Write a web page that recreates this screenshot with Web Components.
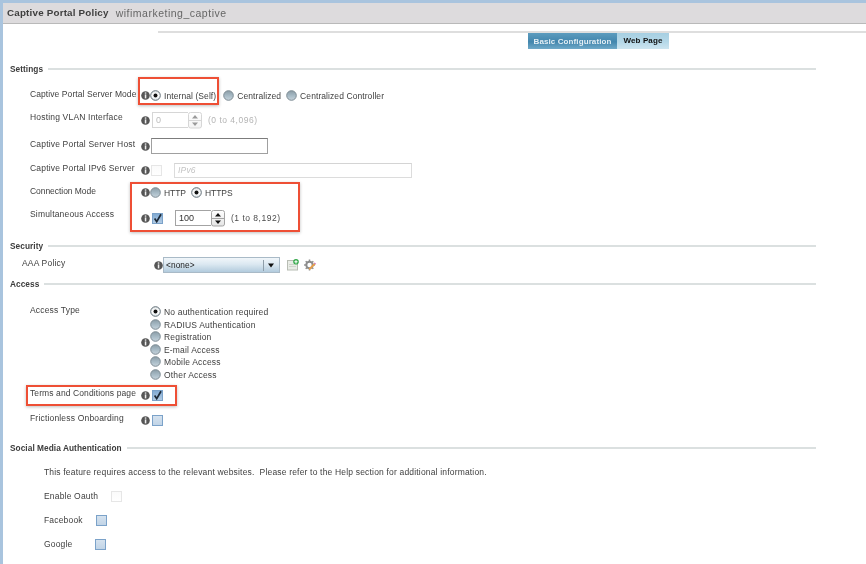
<!DOCTYPE html>
<html>
<head>
<meta charset="utf-8">
<title>Captive Portal Policy</title>
<style>
  html, body { margin: 0; height: 100%; background: #fff; overflow: hidden; }
</style>
</head>
<body>
<portal-page>
  <title-bar name="Captive Portal Policy" value="wifimarketing_captive"></title-bar>
  <tab-strip></tab-strip>

  <section-head style="margin-top:13px">Settings</section-head>
  <form-row label="Captive Portal Server Mode" info style="margin-top:8px;--h:25px;--lp:3px;--ls:.08px">
    <radio-opt checked>Internal (Self)</radio-opt>
    <radio-opt style="margin-left:7px">Centralized</radio-opt>
    <radio-opt style="margin-left:5px">Centralized Controller</radio-opt>
  </form-row>
  <form-row label="Hosting VLAN Interface" info style="--h:26px;--lp:1px">
    <spin-box value="0" disabled hint="(0 to 4,096)" style="margin-left:2px;--w:36px"></spin-box>
  </form-row>
  <form-row label="Captive Portal Server Host" info style="--h:24px;--lp:2px">
    <text-box style="margin-left:1px;--w:117px;--ih:16px"></text-box>
  </form-row>
  <form-row label="Captive Portal IPv6 Server" info style="--h:22px;--lp:2px">
    <check-box disabled style="margin-left:1px"></check-box>
    <text-box disabled placeholder="IPv6" style="margin-left:12px;--w:238px;--ih:15px"></text-box>
  </form-row>
  <form-row label="Connection Mode" info style="--h:26px;--lp:3px;--ls:-.05px">
    <radio-opt>HTTP</radio-opt>
    <radio-opt checked style="margin-left:5px">HTTPS</radio-opt>
  </form-row>
  <form-row label="Simultaneous Access" info style="--h:32px;--lp:0px;--ch:22px">
    <check-box checked style="margin-left:2px"></check-box>
    <spin-box value="100" hint="(1 to 8,192)" style="margin-left:12px;--w:36px"></spin-box>
  </form-row>

  <section-head>Security</section-head>
  <form-row label="AAA Policy" info style="margin-top:1px;--h:23px;--lp:2px;--lx:22px;--lw:132px">
    <select-box value="&lt;none&gt;"></select-box>
    <add-icon style="margin-left:7px"></add-icon>
    <gear-icon style="margin-left:5px"></gear-icon>
  </form-row>

  <section-head>Access</section-head>
  <form-row label="Access Type" info style="margin-top:12px;--h:81px;--lp:0px;--ch:78px">
    <div style="display:flex;flex-direction:column;padding-top:2px">
      <radio-opt checked style="height:12.5px">No authentication required</radio-opt>
      <radio-opt style="height:12.5px">RADIUS Authentication</radio-opt>
      <radio-opt style="height:12.5px">Registration</radio-opt>
      <radio-opt style="height:12.5px">E-mail Access</radio-opt>
      <radio-opt style="height:12.5px">Mobile Access</radio-opt>
      <radio-opt style="height:12.5px">Other Access</radio-opt>
    </div>
  </form-row>
  <form-row label="Terms and Conditions page" info style="--h:25px;--lp:2px;--ls:.1px">
    <check-box checked style="margin-left:2px"></check-box>
  </form-row>
  <form-row label="Frictionless Onboarding" info style="--h:32px;--lp:2px">
    <check-box style="margin-left:2px"></check-box>
  </form-row>

  <section-head>Social Media Authentication</section-head>
  <note-line style="margin-top:10px">This feature requires access to the relevant websites.&nbsp; Please refer to the Help section for additional information.</note-line>
  <form-row label="Enable Oauth" style="margin-top:6px;--h:24px;--lp:4px;--lx:44px;--lw:67px">
    <check-box disabled></check-box>
  </form-row>
  <form-row label="Facebook" style="--h:24px;--lp:4px;--lx:44px;--lw:52px">
    <check-box></check-box>
  </form-row>
  <form-row label="Google" style="--h:24px;--lp:4px;--lx:44px;--lw:51px">
    <check-box></check-box>
  </form-row>

  <red-box style="left:138px;top:77px;width:81px;height:28px"></red-box>
  <red-box style="left:130px;top:182px;width:170px;height:50px"></red-box>
  <red-box style="left:26px;top:385px;width:151px;height:21px"></red-box>
</portal-page>

<script>
const FONT = `font-family:"Liberation Sans",Arial,sans-serif;`;

class PortalPage extends HTMLElement {
    connectedCallback() {
        this.attachShadow({mode: 'open'}).innerHTML = `
        <style>
            :host{
                display:flex;
                flex-direction:column;
                position:relative;
                box-sizing:border-box;
                width:866px;
                height:564px;
                overflow:hidden;
                border-top:3px solid #a9c4de;
                border-left:3px solid #a9c4de;
                background:#fff;
                color:#404040;
                ${FONT}
                font-size:8.5px;
                letter-spacing:.18px;
                filter:blur(.35px);
            }
        </style>
        <slot></slot>`;
    }
}

class TitleBar extends HTMLElement {
    connectedCallback() {
        this.attachShadow({mode: 'open'}).innerHTML = `
        <style>
            :host{
                display:flex;
                align-items:center;
                box-sizing:border-box;
                height:21px;
                padding:0 0 1px 4px;
                background:#dddbdd;
                border-bottom:1px solid #b9b9b9;
            }
            b{font-size:9.8px;color:#3e3e3e;letter-spacing:.2px}
            span{margin-left:7px;font-size:10.5px;color:#666;letter-spacing:.5px}
        </style>
        <b>${this.getAttribute('name')}</b><span>${this.getAttribute('value')}</span>`;
    }
}

class TabStrip extends HTMLElement {
    connectedCallback() {
        this.attachShadow({mode: 'open'}).innerHTML = `
        <style>
            :host{
                display:flex;
                box-sizing:border-box;
                margin:7px 0 0 155px;
                height:18px;
                padding-left:370px;
                border-top:2px solid #dedede;
            }
            div{
                display:flex;
                align-items:center;
                justify-content:center;
                height:16px;
                font-size:8px;
                font-weight:bold;
                letter-spacing:.1px;
            }
            .on{
                width:89px;
                color:#e4eff5;
                background:linear-gradient(#5c9cbe,#4286ad 55%,#6fa9c8);
            }
            .off{
                width:52px;
                color:#111;
                padding-bottom:1px;
                box-sizing:border-box;
                background:linear-gradient(#a6cfe2,#b5d8e8 55%,#cde5f0);
            }
        </style>
        <div class="on">Basic Configuration</div><div class="off">Web Page</div>`;
    }
}

class SectionHead extends HTMLElement {
    connectedCallback() {
        this.attachShadow({mode: 'open'}).innerHTML = `
        <style>
            :host{
                display:flex;
                align-items:center;
                gap:5px;
                height:14px;
                margin-left:7px;
                width:806px;
                font-size:8.3px;
                font-weight:bold;
                color:#3c3c3c;
                letter-spacing:.05px;
            }
            i{flex:1;height:2px;background:#dbe0e0}
        </style>
        <slot></slot><i></i>`;
    }
}

class FormRow extends HTMLElement {
    connectedCallback() {
        const info = this.hasAttribute('info') ? '<info-icon></info-icon>' : '';
        this.attachShadow({mode: 'open'}).innerHTML = `
        <style>
            :host{
                display:flex;
                align-items:flex-start;
                flex:none;
                height:var(--h,24px);
                padding-left:calc(var(--lx,30px) - 3px);
                letter-spacing:var(--ls,.18px);
            }
            .lab{
                flex:none;
                box-sizing:border-box;
                width:var(--lw,111px);
                line-height:14px;
                padding-top:var(--lp,0);
                white-space:nowrap;
            }
            .ctl{
                display:flex;
                align-items:center;
                height:var(--ch,22px);
            }
        </style>
        <div class="lab">${this.getAttribute('label')}</div>
        <div class="ctl">${info}<slot></slot></div>`;
    }
}

class InfoIcon extends HTMLElement {
    connectedCallback() {
        this.attachShadow({mode: 'open'}).innerHTML = `
        <style>:host{display:block;flex:none;width:9px;height:9px}svg{display:block}</style>
        <svg width="9" height="9" viewBox="0 0 9 9">
            <circle cx="4.5" cy="4.5" r="4.3" fill="#565656"/>
            <rect x="3.8" y="1.4" width="1.5" height="1.3" fill="#eee"/>
            <rect x="3.8" y="3.4" width="1.5" height="4" fill="#eee"/>
        </svg>`;
    }
}

class RadioOpt extends HTMLElement {
    connectedCallback() {
        const on = this.hasAttribute('checked');
        this.attachShadow({mode: 'open'}).innerHTML = `
        <style>
            :host{display:flex;align-items:center;flex:none;white-space:nowrap}
            svg{display:block;flex:none;margin-right:3px}
            span{padding-top:1px}
        </style>
        <svg width="11" height="11" viewBox="0 0 11 11">
            <defs><linearGradient id="g" x1="0" y1="0" x2="0" y2="1">
                <stop offset="0" stop-color="${on ? '#e4e8ea' : '#8a9ca6'}"/>
                <stop offset=".55" stop-color="${on ? '#fff' : '#a9bcc7'}"/>
                <stop offset="1" stop-color="${on ? '#dfe6ea' : '#c6d3db'}"/>
            </linearGradient></defs>
            <circle cx="5.5" cy="5.5" r="4.8" fill="url(#g)" stroke="${on ? '#5f6d75' : '#7f8d95'}" stroke-width="1"/>
            ${on ? '<circle cx="5.5" cy="5.5" r="2" fill="#111"/>' : ''}
        </svg><span><slot></slot></span>`;
    }
}

class CheckBox extends HTMLElement {
    connectedCallback() {
        const on = this.hasAttribute('checked');
        const off = this.hasAttribute('disabled');
        this.attachShadow({mode: 'open'}).innerHTML = `
        <style>
            :host{display:block;flex:none;width:11px;height:11px}
            svg{display:block}
        </style>
        <svg width="11" height="11" viewBox="0 0 11 11">
            <defs><linearGradient id="g" x1="0" y1="0" x2="0" y2="1">
                <stop offset="0" stop-color="${off ? '#fafafa' : (on ? '#7fa9d2' : '#d6e3ef')}"/>
                <stop offset="1" stop-color="${off ? '#fff' : (on ? '#b4cde5' : '#c0d3e6')}"/>
            </linearGradient></defs>
            <rect x=".5" y=".5" width="10" height="10" fill="url(#g)" stroke="${off ? '#e6e6e6' : '#7ba2c9'}"/>
            ${on ? '<path d="M2.6 5.6 L4.7 8.6 L9 1.2" fill="none" stroke="#1d2a38" stroke-width="1.7"/>' : ''}
        </svg>`;
    }
}

class TextBox extends HTMLElement {
    connectedCallback() {
        const off = this.hasAttribute('disabled');
        const ph = this.getAttribute('placeholder') || '';
        this.attachShadow({mode: 'open'}).innerHTML = `
        <style>
            :host{
                display:block;
                flex:none;
                box-sizing:border-box;
                width:var(--w,100px);
                height:var(--ih,16px);
                line-height:calc(var(--ih,16px) - 2px);
                padding-left:3px;
                font-size:8.5px;
                font-style:italic;
                color:#c4c4c4;
                background:#fff;
                border:1px solid ${off ? '#dcdcdc' : '#a0a0a0'};
                border-top-color:${off ? '#d4d4d4' : '#7c7c7c'};
            }
        </style>${ph}`;
    }
}

class SpinBox extends HTMLElement {
    connectedCallback() {
        const off = this.hasAttribute('disabled');
        const fill = off ? '#9a9a9a' : '#111';
        const line = off ? '#d6d6d6' : '#a3a3a3';
        this.attachShadow({mode: 'open'}).innerHTML = `
        <style>
            :host{display:flex;align-items:center;flex:none;color:${off ? '#b4b4b4' : '#4c4c4c'};letter-spacing:.5px}
            .in{
                box-sizing:border-box;
                width:var(--w,36px);
                height:16px;
                line-height:14px;
                padding-left:3px;
                letter-spacing:0;
                font-size:9px;
                color:${off ? '#bbb' : '#333'};
                border:1px solid ${line};
                border-right:0;
            }
            svg{display:block;flex:none}
            span{margin-left:6px;white-space:nowrap}
        </style>
        <div class="in">${this.getAttribute('value')}</div>
        <svg width="14" height="17" viewBox="0 0 14 17">
            <defs><linearGradient id="g" x1="0" y1="0" x2="0" y2="1">
                <stop offset="0" stop-color="#fff"/><stop offset="1" stop-color="${off ? '#f3f3f3' : '#e4e4e4'}"/>
            </linearGradient></defs>
            <rect x=".5" y=".5" width="13" height="15.5" rx="2" fill="url(#g)" stroke="${line}"/>
            <line x1="1" y1="8.5" x2="13" y2="8.5" stroke="${line}"/>
            <path d="M7 3 L10 6.6 L4 6.6 Z M7 14 L10 10.4 L4 10.4 Z" fill="${fill}"/>
        </svg>
        <span>${this.getAttribute('hint')}</span>`;
    }
}

class SelectBox extends HTMLElement {
    connectedCallback() {
        this.attachShadow({mode: 'open'}).innerHTML = `
        <style>
            :host{
                display:flex;
                align-items:center;
                flex:none;
                box-sizing:border-box;
                width:117px;
                height:16px;
                padding-left:2px;
                font-size:8.3px;
                letter-spacing:.1px;
                color:#222;
                background:linear-gradient(#f1f6fa,#dbe8f1 45%,#b2cbdd);
                border:1px solid #a9bac7;
            }
            div{flex:1}
            i{width:1px;height:11px;background:#8f9ea9}
            svg{display:block;margin:0 5px 0 4px}
        </style>
        <div>${this.getAttribute('value').replace(/</g, '&lt;')}</div><i></i>
        <svg width="6" height="5" viewBox="0 0 6 5"><path d="M0 .5 H6 L3 4.5 Z" fill="#111"/></svg>`;
    }
}

class AddIcon extends HTMLElement {
    connectedCallback() {
        this.attachShadow({mode: 'open'}).innerHTML = `
        <style>:host{display:block;flex:none;width:12px;height:12px}svg{display:block}</style>
        <svg width="12" height="12" viewBox="0 0 12 12">
            <rect x=".5" y="1.5" width="10" height="9.5" fill="#e9ece6" stroke="#b8bdb4"/>
            <path d="M2 5.5H7M2 7.5H9" stroke="#cfd3cb"/>
            <circle cx="9" cy="2.8" r="2.8" fill="#35a84a"/>
            <path d="M9 1.2V4.4M7.4 2.8H10.6" stroke="#fff" stroke-width="1.1"/>
        </svg>`;
    }
}

class GearIcon extends HTMLElement {
    connectedCallback() {
        this.attachShadow({mode: 'open'}).innerHTML = `
        <style>:host{display:block;flex:none;width:12px;height:12px}svg{display:block}</style>
        <svg width="12" height="12" viewBox="0 0 12 12">
            <circle cx="5.5" cy="6" r="3.2" fill="none" stroke="#8c8c8c" stroke-width="2"/>
            <path d="M5.5 .6V2.4M5.5 9.6V11.4M.1 6H1.9M9.1 6H10.9M1.7 2.2L3 3.5M8 8.5L9.3 9.8M1.7 9.8L3 8.5M8 3.5L9.3 2.2" stroke="#8c8c8c" stroke-width="1.5"/>
            <path d="M4.5 9.8L10 4.2L11.4 5.5L5.9 11Z" fill="#e8a04c"/>
            <path d="M10 4.2L11.4 5.5L12 4.9L10.7 3.6Z" fill="#c9569a"/>
        </svg>`;
    }
}

class NoteLine extends HTMLElement {
    connectedCallback() {
        this.attachShadow({mode: 'open'}).innerHTML = `
        <style>:host{display:block;height:14px;line-height:14px;padding-left:41px;white-space:nowrap}</style>
        <slot></slot>`;
    }
}

class RedBox extends HTMLElement {
    connectedCallback() {
        this.attachShadow({mode: 'open'}).innerHTML = `
        <style>
            :host{
                display:block;
                position:absolute;
                box-sizing:border-box;
                margin:-3px 0 0 -3px;
                border:2px solid #ee4f35;
                box-shadow:0 1px 3px rgba(0,0,0,.25);
            }
        </style>`;
    }
}

customElements.define('portal-page', PortalPage);
customElements.define('title-bar', TitleBar);
customElements.define('tab-strip', TabStrip);
customElements.define('section-head', SectionHead);
customElements.define('form-row', FormRow);
customElements.define('info-icon', InfoIcon);
customElements.define('radio-opt', RadioOpt);
customElements.define('check-box', CheckBox);
customElements.define('text-box', TextBox);
customElements.define('spin-box', SpinBox);
customElements.define('select-box', SelectBox);
customElements.define('add-icon', AddIcon);
customElements.define('gear-icon', GearIcon);
customElements.define('note-line', NoteLine);
customElements.define('red-box', RedBox);
</script>
</body>
</html>
